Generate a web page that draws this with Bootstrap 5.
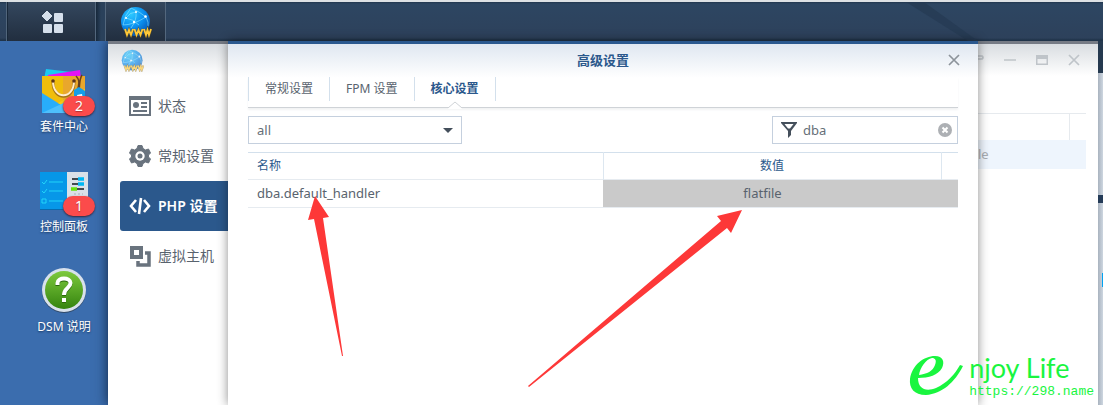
<!DOCTYPE html>
<html lang="zh-CN">
<head>
<meta charset="utf-8">
<meta name="viewport" content="width=device-width, initial-scale=1">
<title>高级设置</title>
<link href="https://cdn.jsdelivr.net/npm/bootstrap@5.3.0/dist/css/bootstrap.min.css" rel="stylesheet">
<style>
  body { font-family: "Noto Sans", "Noto Sans CJK SC", sans-serif; font-size: 12px; line-height: 20px; color: #59636e; background: #3a6bac; overflow: hidden; }
  button { font: inherit; color: inherit; }
  svg { display: block; flex: none; }

  .taskbar { height: 41px; z-index: 1; border-top: 2px solid #dde1e4; background: linear-gradient(#22374f 0, #2d4662 2px, #2d415b 36px, #20344a 38px); }
  .task-end { width: 7px; border-right: 1px solid #51657b; }
  .task-btn { border: solid #53677d; border-width: 0 1px; background: linear-gradient(#34475e, #212e3f); place-items: center; }
  .task-menu { width: 89px; border-color: #18283a #53677d #18283a #18283a; }
  .task-app { width: 61px; }
  .task-gap { width: 9px; background: linear-gradient(90deg, #17283b, #2a415b 5px); }
  .streak { width: 90px; margin-right: 107px; }

  .desk-icons { width: 108px; padding: 26px 0 0 20px; gap: 28px; background: #3b6dae; }
  .desk-item { color: #fff; height: 72px; text-decoration: none; text-shadow: 0 1px 2px #173762; }
  .desk-item:hover { color: #fff; }
  .count { right: -7px; top: 29px; width: 32px; height: 20px; border-radius: 10px; background: #fb4b4b; box-shadow: 0 1px 2px #38273b; font-size: 14px; text-shadow: 0 1px 1px #a33; }

  .app-window { box-shadow: 0 0 12px #10233f; background: #fff; }
  .window-side { width: 120px; padding-left: 12px; border-top: 3px solid #767b85; background: linear-gradient(#d9dde1, #fff 32px); }
  .window-side .app-logo { padding: 5px 0 0 1px; height: 37px; }
  .side-link { height: 50px; padding-left: 8px; gap: 6px; font-size: 14px; color: #59636e; text-decoration: none; white-space: nowrap; }
  .side-link.current { background: #2b588c; color: #fff; font-weight: 600; border-radius: 3px 0 0 3px; }
  .window-rest { width: 120px; border-top: 3px solid #767b85; background: linear-gradient(#d9dde1, #fff 32px); color: #a8adb2; overflow: hidden; }
  .window-tools { height: 69px; padding: 4px 12px 0 0; gap: 8px; color: #bfc4c9; }
  .tool { border: 0; padding: 0; background: none; width: 24px; height: 24px; display: grid; place-items: center; }
  .tool-cut { width: 12px; justify-items: start; }
  .back-head { height: 27px; margin-right: 12px; border-top: 1px solid #e6eaee; }
  .back-head span { width: 17px; border-left: 1px solid #e6eaee; }
  .back-row { height: 29px; margin-right: 12px; background: #eef5fd; line-height: 29px; font-size: 13px; }

  .dialog-pane { z-index: 2; min-width: 0; border-top: 3px solid #2a588f; padding: 0 20px; background: linear-gradient(#dfe7f1, #fff 34px); box-shadow: 0 0 10px rgba(0,0,0,.45); }
  .dialog-title { font-size: 13px; font-weight: 600; color: #2b588c; height: 33px; padding: 0 0 1px; }
  .dialog-title .tool { right: -8px; top: 4px; color: #8d949b; }
  .tab-row { height: 31px; border-bottom: 1px solid #cfd3d7; box-shadow: 0 2px 2px #f2f3f4; }
  .tab-btn { height: 24px; padding: 0 16px; border: 0; border-left: 1px solid #d3e0ec; background: none; position: relative; }
  .tab-btn:last-child { border-right: 1px solid #d3e0ec; }
  .tab-btn.current { font-weight: 700; color: #2b588c; }
  .notch { left: 33px; top: 24px; }
  .filters { padding: 8px 0; }
  .field { height: 28px; border: 1px solid #c5d0de; border-radius: 0; background-color: #fff; color: #666f78; font-size: 13px; line-height: 18px; }
  select.field { width: 214px; padding: 2px 8px; appearance: none; background: url("data:image/svg+xml,%3Csvg xmlns='http://www.w3.org/2000/svg' width='10' height='5'%3E%3Cpath fill='%23444f5b' d='M0 0h10L5 5z'/%3E%3C/svg%3E") no-repeat right 8px center; }
  .search { width: 186px; padding: 0 5px 0 8px; gap: 6px; }
  .search input { border: 0; padding: 0; min-width: 0; color: inherit; outline: 0; background: none; }
  .settings { width: 100%; table-layout: fixed; border-top: 1px solid #d3e0ec; line-height: 18px; }
  .settings tr { border-bottom: 1px solid #e6ebf0; }
  .settings thead tr { height: 27px; }
  .settings tbody tr { height: 28px; }
  .settings th { color: #2b588c; font-weight: 400; padding: 0 9px; }
  .settings th + th { border-left: 1px solid #dde7f0; }
  .settings td { font-size: 13px; padding: 0 9px 2px; }
  .settings .value { background: #cacaca; padding-right: 45px; }
  .col-rest { width: 17px; }

  .desk-edge { width: 5px; background: linear-gradient(90deg, #a9b3bf, #cdd6e0); }
  .edge-top { height: 32px; background: #25394f; }
  .edge-bar { height: 8px; margin-top: 122px; background: #243b57; }
  .edge-link { height: 14px; margin: 70px 0 0 4px; background: #00a2f2; }

  .watermark { right: 9px; bottom: 3px; z-index: 3; color: #19f53f; }
  .wm-name { font: 27px/28px Lato, sans-serif; }
  .wm-url { font: 13px/20px "Liberation Mono", monospace; color: inherit; text-decoration: none; }
</style>
</head>
<body>
<svg width="0" height="0" class="position-absolute" aria-hidden="true">
  <defs>
    <radialGradient id="globeFill" cx="35%" cy="25%" r="80%"><stop stop-color="#2cc8ff"/><stop offset=".55" stop-color="#0b90f0"/><stop offset="1" stop-color="#0555b5"/></radialGradient>
    <symbol id="globe" viewBox="0 0 32 32">
      <circle cx="15.500" cy="15.500" r="14.500" fill="url(#globeFill)"/>
      <g fill="none" stroke="#8fe6ff" stroke-width=".6"><path d="M11 2Q20 6 26 11 29 17 28 20M11 2Q4 10 3 19M6 12Q10 6 16 6M16 6Q17 14 11 22M3 19q10 0 23-8M6 12q7 1 13 7"/></g>
      <g fill="#fff"><circle cx="16" cy="6" r="1"/><circle cx="25.500" cy="10.500" r="1.300"/><circle cx="14" cy="16" r="1.200"/><circle cx="6" cy="12" r="1"/></g>
      <path d="m5 23 2 6 2-5 2 5 2-6M14.500 23l2 6 2-5 2 5 2-6M24 23l2 6 1.500-5 1.500 5 2-6" fill="none" stroke="#5b4a20" stroke-opacity=".7" stroke-width="2.800"/>
      <path d="m5 23 2 6 2-5 2 5 2-6M14.500 23l2 6 2-5 2 5 2-6M24 23l2 6 1.500-5 1.500 5 2-6" fill="none" stroke="#ffc838" stroke-width="1.800"/>
    </symbol>
    <symbol id="cross" viewBox="0 0 12 12"><path d="m1 1 10 10M11 1 1 11" stroke="currentColor" stroke-width="1.700"/></symbol>
  </defs>
</svg>

<div class="vh-100 d-flex flex-column position-relative overflow-hidden">
  <header class="taskbar d-flex position-relative">
    <div class="task-end"></div>
    <button class="task-btn task-menu d-grid p-0" type="button" aria-label="主菜单">
      <svg width="24" height="24" viewBox="0 0 24 24" fill="#d5dfeb"><path d="m7 1 5 5-5 5-5-5z" stroke="#d5dfeb" stroke-linejoin="round"/><rect x="14" y="3" width="9" height="9" rx="1"/><rect x="3" y="14" width="9" height="9" rx="1"/><rect x="14" y="14" width="9" height="9" rx="1"/></svg>
    </button>
    <div class="task-gap"></div>
    <button class="task-btn task-app d-grid p-0" type="button" aria-label="Web Station"><svg width="32" height="32"><use href="#globe"/></svg></button>
    <svg class="streak ms-auto" height="39" viewBox="0 0 90 39"><path d="M0 0h18l54 39H62z" fill="#263b54" opacity=".8"/></svg>
  </header>

  <main class="d-flex flex-grow-1">
    <nav class="desk-icons d-flex flex-column flex-shrink-0 align-items-center">
      <a class="desk-item d-flex flex-column align-items-center position-relative" href="#">
        <svg width="48" height="50" viewBox="0 0 48 50"><path d="m6 2 34 4-1 6H4z" fill="#19c9f0"/><path d="m8 8 32-5 1 9H8z" fill="#e313f4"/><path d="M2 9h43v37H2z" fill="#f0bd0b"/><path d="M23 9h22v37H23z" fill="#e9a72c"/><path d="M2 26 34 46H2z" fill="#28adfa"/><path d="M18 36 45 22v24H34z" fill="#f4ca17"/><path d="M2 46 30 33l5 13z" fill="#4ec0fc"/><path d="M13 15c0 19 21 19 21 0" fill="none" stroke="#a57315" stroke-width="3"/><path d="M13 14c0 19 21 19 21 0" fill="none" stroke="#ffeccb" stroke-width="2"/><g fill="#5c3419"><circle cx="13" cy="14" r="1.800"/><circle cx="34" cy="14" r="1.800"/></g><path d="M36 9c5 5 2 9 2 14M42 8c-3 5-2 10-3 15" fill="none" stroke="#68401a" stroke-width="1.500"/><path d="m34 23 5-3 6 4v13H34z" fill="#159ee8"/><path d="m37 28 5-1 1 5-5 1z" fill="#fff"/></svg>
        <span>套件中心</span><span class="count position-absolute text-center">2</span>
      </a>
      <a class="desk-item d-flex flex-column align-items-center position-relative" href="#">
        <svg width="48" height="50" viewBox="0 0 48 50"><path d="M0 5h28v37H0z" fill="#0797e8"/><path d="M27 5h21v37H27z" fill="#dae0e8"/><path d="M0 42h48v1H0z" fill="#086bb0"/><g fill="none" stroke="#22d4f8" stroke-width="1"><path d="m2 15 2 2 3-4M9 15h14M2 24l2 2 3-4M9 24h14M9 34h14M2 32h4v4H2z"/></g><path d="M32 12h12M32 17h12M32 22h12" stroke="#42484f" stroke-width="2"/><path d="M38 12h6M38 17h6" stroke="#00b7f4" stroke-width="3.500"/><path d="M31 22h6" stroke="#67e20d" stroke-width="3.500"/><path d="M34 27h9" stroke="#a8b1bb" stroke-dasharray="2 2"/></svg>
        <span>控制面板</span><span class="count position-absolute text-center">1</span>
      </a>
      <a class="desk-item d-flex flex-column align-items-center" href="#">
        <svg width="48" height="50" viewBox="0 0 48 50"><defs><linearGradient id="help" x2="0" y2="1"><stop stop-color="#7dc93d"/><stop offset="1" stop-color="#35840f"/></linearGradient></defs><circle cx="24" cy="24" r="22" fill="#314a69"/><circle cx="24" cy="23" r="22" fill="#d8e1ec"/><circle cx="24" cy="23" r="19" fill="url(#help)"/><path d="M17.500 19v-2c0-6 13-6 13 0 0 5-6.500 5-6.500 12M24 32v4" fill="none" stroke="#2c690c" stroke-width="4"/><path d="M17.500 18v-2c0-6 13-6 13 0 0 5-6.500 5-6.500 12M24 31v4" fill="none" stroke="#fff" stroke-width="4"/></svg>
        <span>DSM 说明</span>
      </a>
    </nav>

    <section class="app-window d-flex flex-grow-1 position-relative">
      <aside class="window-side flex-shrink-0">
        <div class="app-logo"><svg width="23" height="23" opacity=".65"><use href="#globe"/></svg></div>
        <nav>
          <a class="side-link d-flex align-items-center" href="#"><svg width="24" height="24" viewBox="0 0 24 24"><path d="M1 2h22v20H1z" fill="#69737e"/><path d="M3 6h18v14H3z" fill="#fff"/><circle cx="8" cy="11" r="3" fill="#69737e"/><path d="M13 9h6M13 13h6M5 17h14" stroke="#69737e" stroke-width="2"/></svg>状态</a>
          <a class="side-link d-flex align-items-center" href="#"><svg width="24" height="24" viewBox="0 0 24 24" fill="#69737e" stroke="#69737e" stroke-linejoin="round"><path d="M10 1.500h4l1 3 2.500 1.500 3-1 2 4-2 2v2l2 2-2 4-3-1-2.500 1.500-1 3h-4l-1-3L6.500 18l-3 1-2-4 2-2v-2l-2-2 2-4 3 1L9 4.500z"/><circle cx="12" cy="12" r="4.700" fill="#fff" stroke="none"/><circle cx="12" cy="12" r="2.500" stroke="none"/></svg>常规设置</a>
          <a class="side-link current d-flex align-items-center" href="#"><svg width="24" height="24" viewBox="0 0 24 24" fill="none" stroke="#fff" stroke-width="2.600"><path d="M8 6 3 12l5 6M16 6l5 6-5 6M13 4l-2 16"/></svg>PHP 设置</a>
          <a class="side-link d-flex align-items-center" href="#"><svg width="24" height="24" viewBox="0 0 24 24" fill="none" stroke="#69737e" stroke-width="4"><path d="M4 4h9v9H4z"/><path d="M17 9h4v12H10v-4" stroke-width="3.500"/></svg>虚拟主机</a>
        </nav>
      </aside>

      <section class="dialog-pane flex-grow-1 position-relative" role="dialog" aria-labelledby="dlgTitle">
        <div class="dialog-title d-flex align-items-center justify-content-center position-relative">
          <span id="dlgTitle">高级设置</span>
          <button class="tool position-absolute" type="button" aria-label="关闭"><svg width="12" height="12"><use href="#cross"/></svg></button>
        </div>
        <div class="tab-row d-flex" role="tablist">
          <button class="tab-btn" type="button" role="tab">常规设置</button>
          <button class="tab-btn" type="button" role="tab">FPM 设置</button>
          <button class="tab-btn current" type="button" role="tab" aria-selected="true">核心设置<svg class="notch position-absolute" width="14" height="8" viewBox="0 0 14 8"><path d="M0 8V7l7-6 7 6v1z" fill="#fff"/><path d="m0 7 7-6 7 6" fill="none" stroke="#cfd3d7"/></svg></button>
        </div>
        <div class="filters d-flex justify-content-between">
          <select class="field" aria-label="类别"><option>all</option></select>
          <div class="field search d-flex align-items-center">
            <svg width="16" height="16" viewBox="0 0 16 16"><path d="M0 0h16v1l-6 8v4l-3 3V9L0 1z" fill="#444f5b"/><path d="M3.500 2h9L9 6.500H7z" fill="#fff"/></svg>
            <input class="flex-grow-1" type="text" value="dba" aria-label="筛选">
            <button class="border-0 p-0 bg-transparent" type="button" aria-label="清除"><svg width="14" height="14" viewBox="0 0 14 14"><circle cx="7" cy="7" r="7" fill="#adb0b4"/><path d="m4.500 4.500 5 5M9.500 4.500l-5 5" stroke="#fff" stroke-width="2"/></svg></button>
          </div>
        </div>
        <table class="settings">
          <colgroup><col class="w-50"><col><col class="col-rest"></colgroup>
          <thead><tr><th>名称</th><th class="text-center">数值</th><th aria-label="更多"></th></tr></thead>
          <tbody><tr><td>dba.default_handler</td><td class="value text-center" colspan="2">flatfile</td></tr></tbody>
        </table>
        <svg class="position-absolute top-0 start-0 pe-none" width="750" height="361" viewBox="228 44 750 361" fill="#fd3838" aria-hidden="true"><path d="M315 196 308 220 314 219 342 356H343L323 218 329 217zM742 210 717 216 721 221 528 386 529 387 727 228 731 233z"/></svg>
      </section>

      <div class="window-rest flex-shrink-0">
        <div class="window-tools d-flex">
          <button class="tool tool-cut flex-shrink-0" type="button" aria-label="帮助"><svg width="12" height="12" viewBox="0 0 12 12" fill="none" stroke="currentColor" stroke-width="1.700"><path d="M0 2h4q2 1.500 0 3H0"/></svg></button>
          <button class="tool" type="button" aria-label="最小化"><svg width="12" height="12" viewBox="0 0 12 12"><path d="M0 6h12" stroke="currentColor" stroke-width="1.500"/></svg></button>
          <button class="tool" type="button" aria-label="最大化"><svg width="12" height="12" viewBox="0 0 12 12"><path d="M0 1h12v10H0zm1.500 4v4.500h9V5z" fill="currentColor" fill-rule="evenodd"/></svg></button>
          <button class="tool" type="button" aria-label="关闭"><svg width="12" height="12"><use href="#cross"/></svg></button>
        </div>
        <div class="back-head d-flex justify-content-end"><span></span></div>
        <div class="back-row">le</div>
      </div>
    </section>

    <div class="desk-edge flex-shrink-0 position-relative"><div class="edge-top"></div><div class="edge-bar"></div><div class="edge-link"></div></div>
  </main>

  <div class="watermark position-absolute d-flex">
    <svg width="60" height="46" viewBox="0 0 60 46" aria-hidden="true"><path fill="#19f53f" fill-rule="evenodd" d="M9 24C9 35 17 38 27 34 38 29 46 20 51 11L54 12C46 28 33 40 17 41 5 41 0 34 1 25 3 11 15 2 26 2 34 2 36 8 33 14 29 21 20 24 9 24zM10 21C18 20 24 17 26 11 28 6 26 4 23 4 17 5 11 14 10 21z"/></svg>
    <div class="d-flex flex-column"><span class="wm-name">njoy Life</span><a class="wm-url" href="#">https://298.name</a></div>
  </div>
</div>
<script src="https://cdn.jsdelivr.net/npm/bootstrap@5.3.0/dist/js/bootstrap.bundle.min.js"></script>
</body>
</html>
